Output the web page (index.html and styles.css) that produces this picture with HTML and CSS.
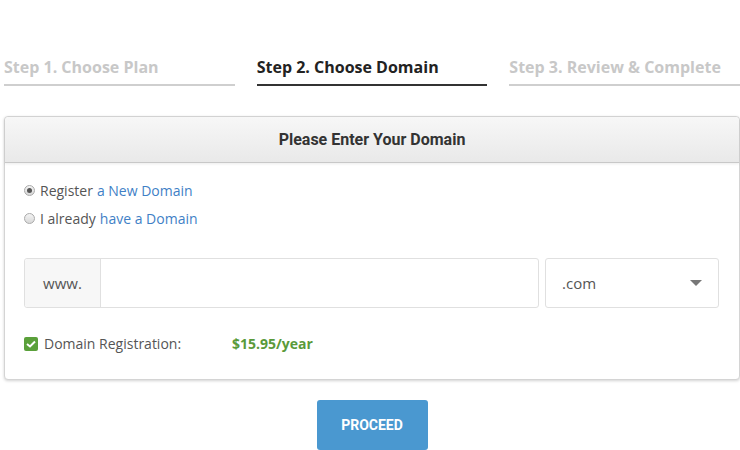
FILE: index.html
```html
<!DOCTYPE html>
<html lang="en">

<head>
    <meta charset="UTF-8">
    <meta name="viewport" content="width=device-width, initial-scale=1.0">
    <title>Choose Domain</title>
    <link rel="stylesheet" href="styles.css">
</head>

<body>
    <div class="page">
        <ul class="steps">
            <li class="step">Step 1. Choose Plan</li>
            <li class="step active">Step 2. Choose Domain</li>
            <li class="step">Step 3. Review &amp; Complete</li>
        </ul>

        <div class="panel">
            <div class="panel-heading">Please Enter Your Domain</div>
            <div class="panel-body">
                <label class="radio">
                    <span class="radio-dot checked"></span>
                    Register <a href="#">a New Domain</a>
                </label>
                <label class="radio">
                    <span class="radio-dot"></span>
                    I already <a href="#">have a Domain</a>
                </label>

                <div class="domain-row">
                    <div class="input-group">
                        <span class="addon">www.</span>
                        <span class="domain-input"></span>
                    </div>
                    <div class="tld-select">
                        <span>.com</span>
                        <span class="caret"></span>
                    </div>
                </div>

                <div class="fee-row">
                    <span class="check">
                        <svg width="10" height="8" viewBox="0 0 10 8">
                            <path d="M1 4 L4 6.5 L9 1.5" stroke="#fff" stroke-width="2" fill="none" />
                        </svg>
                    </span>
                    <span class="fee-label">Domain Registration:</span>
                    <span class="fee-price">$15.95/year</span>
                </div>
            </div>
        </div>

        <div class="actions">
            <button type="button">PROCEED</button>
        </div>
    </div>
</body>

</html>
```

FILE: styles.css
```css
body {
    margin: 0;
    padding: 0;
    background-color: #fff;
    font-family: "Open Sans", Arial, sans-serif;
    overflow: hidden;
}

.page {
    width: 736px;
    padding: 56px 0 0 4px;
}

/* step tabs */
.steps {
    display: flex;
    gap: 22px;
    list-style: none;
    margin: 0;
    padding: 0;
}

.step {
    flex: 1;
    font-size: 16px;
    font-weight: 700;
    color: #c8c8c8;
    padding-bottom: 6px;
    border-bottom: 2px solid #cfcfcf;
    line-height: 22px;
}

.step.active {
    color: #222;
    border-bottom: 2px solid #333;
}

/* panel */
.panel {
    margin-top: 30px;
    border: 1px solid #d4d4d4;
    border-radius: 4px;
    box-shadow: 0 1px 3px rgba(0, 0, 0, 0.18);
    background-color: #fff;
}

.panel-heading {
    height: 45px;
    line-height: 45px;
    text-align: center;
    font-family: Roboto, Arial, sans-serif;
    font-weight: 700;
    font-size: 16px;
    color: #333;
    background: linear-gradient(#f7f7f7, #e9e9e9);
    border-bottom: 1px solid #c8c8c8;
    border-radius: 4px 4px 0 0;
    box-shadow: 0 1px 3px rgba(0, 0, 0, 0.08);
}

.panel-body {
    padding: 13px 20px 26px 19px;
}

.radio {
    display: flex;
    align-items: center;
    font-size: 14px;
    color: #555;
    height: 28px;
    gap: 4px;
}

.radio a {
    color: #3f7fc6;
    text-decoration: none;
}

.radio-dot {
    width: 11px;
    height: 11px;
    border-radius: 50%;
    border: 1px solid #aaa;
    background: linear-gradient(#f4f4f4, #d8d8d8);
    box-sizing: border-box;
    position: relative;
    margin-right: 1px;
}

.radio-dot.checked::after {
    content: "";
    position: absolute;
    left: 2px;
    top: 2px;
    width: 5px;
    height: 5px;
    border-radius: 50%;
    background-color: #555;
}

/* domain input */
.domain-row {
    display: flex;
    gap: 6px;
    margin-top: 26px;
}

.input-group {
    display: flex;
    width: 515px;
    height: 50px;
    border: 1px solid #e0e0e0;
    border-radius: 3px;
    box-sizing: border-box;
}

.addon {
    width: 75px;
    background-color: #f7f7f7;
    border-right: 1px solid #e0e0e0;
    border-radius: 3px 0 0 3px;
    display: flex;
    align-items: center;
    justify-content: center;
    font-size: 15px;
    color: #555;
}

.domain-input {
    flex: 1;
}

.tld-select {
    width: 174px;
    height: 50px;
    border: 1px solid #e0e0e0;
    border-radius: 3px;
    box-sizing: border-box;
    display: flex;
    align-items: center;
    justify-content: space-between;
    padding: 0 16px 0 16px;
    font-size: 15px;
    color: #555;
}

.caret {
    width: 0;
    height: 0;
    border-left: 6px solid transparent;
    border-right: 6px solid transparent;
    border-top: 6px solid #777;
}

/* fee */
.fee-row {
    display: flex;
    align-items: center;
    margin-top: 26px;
    font-size: 14px;
}

.check {
    width: 14px;
    height: 14px;
    border-radius: 2px;
    background-color: #5aa03a;
    display: flex;
    align-items: center;
    justify-content: center;
    margin-right: 6px;
}

.fee-label {
    color: #555;
    width: 188px;
}

.fee-price {
    color: #5a9a3a;
    font-weight: 700;
}

/* button */
.actions {
    display: flex;
    justify-content: center;
    padding-top: 20px;
}

button {
    background-color: #4a98d0;
    color: #fff;
    border: none;
    border-radius: 3px;
    width: 111px;
    height: 50px;
    font-family: Roboto, Arial, sans-serif;
    font-weight: 700;
    font-size: 14px;
    cursor: pointer;
}
```
